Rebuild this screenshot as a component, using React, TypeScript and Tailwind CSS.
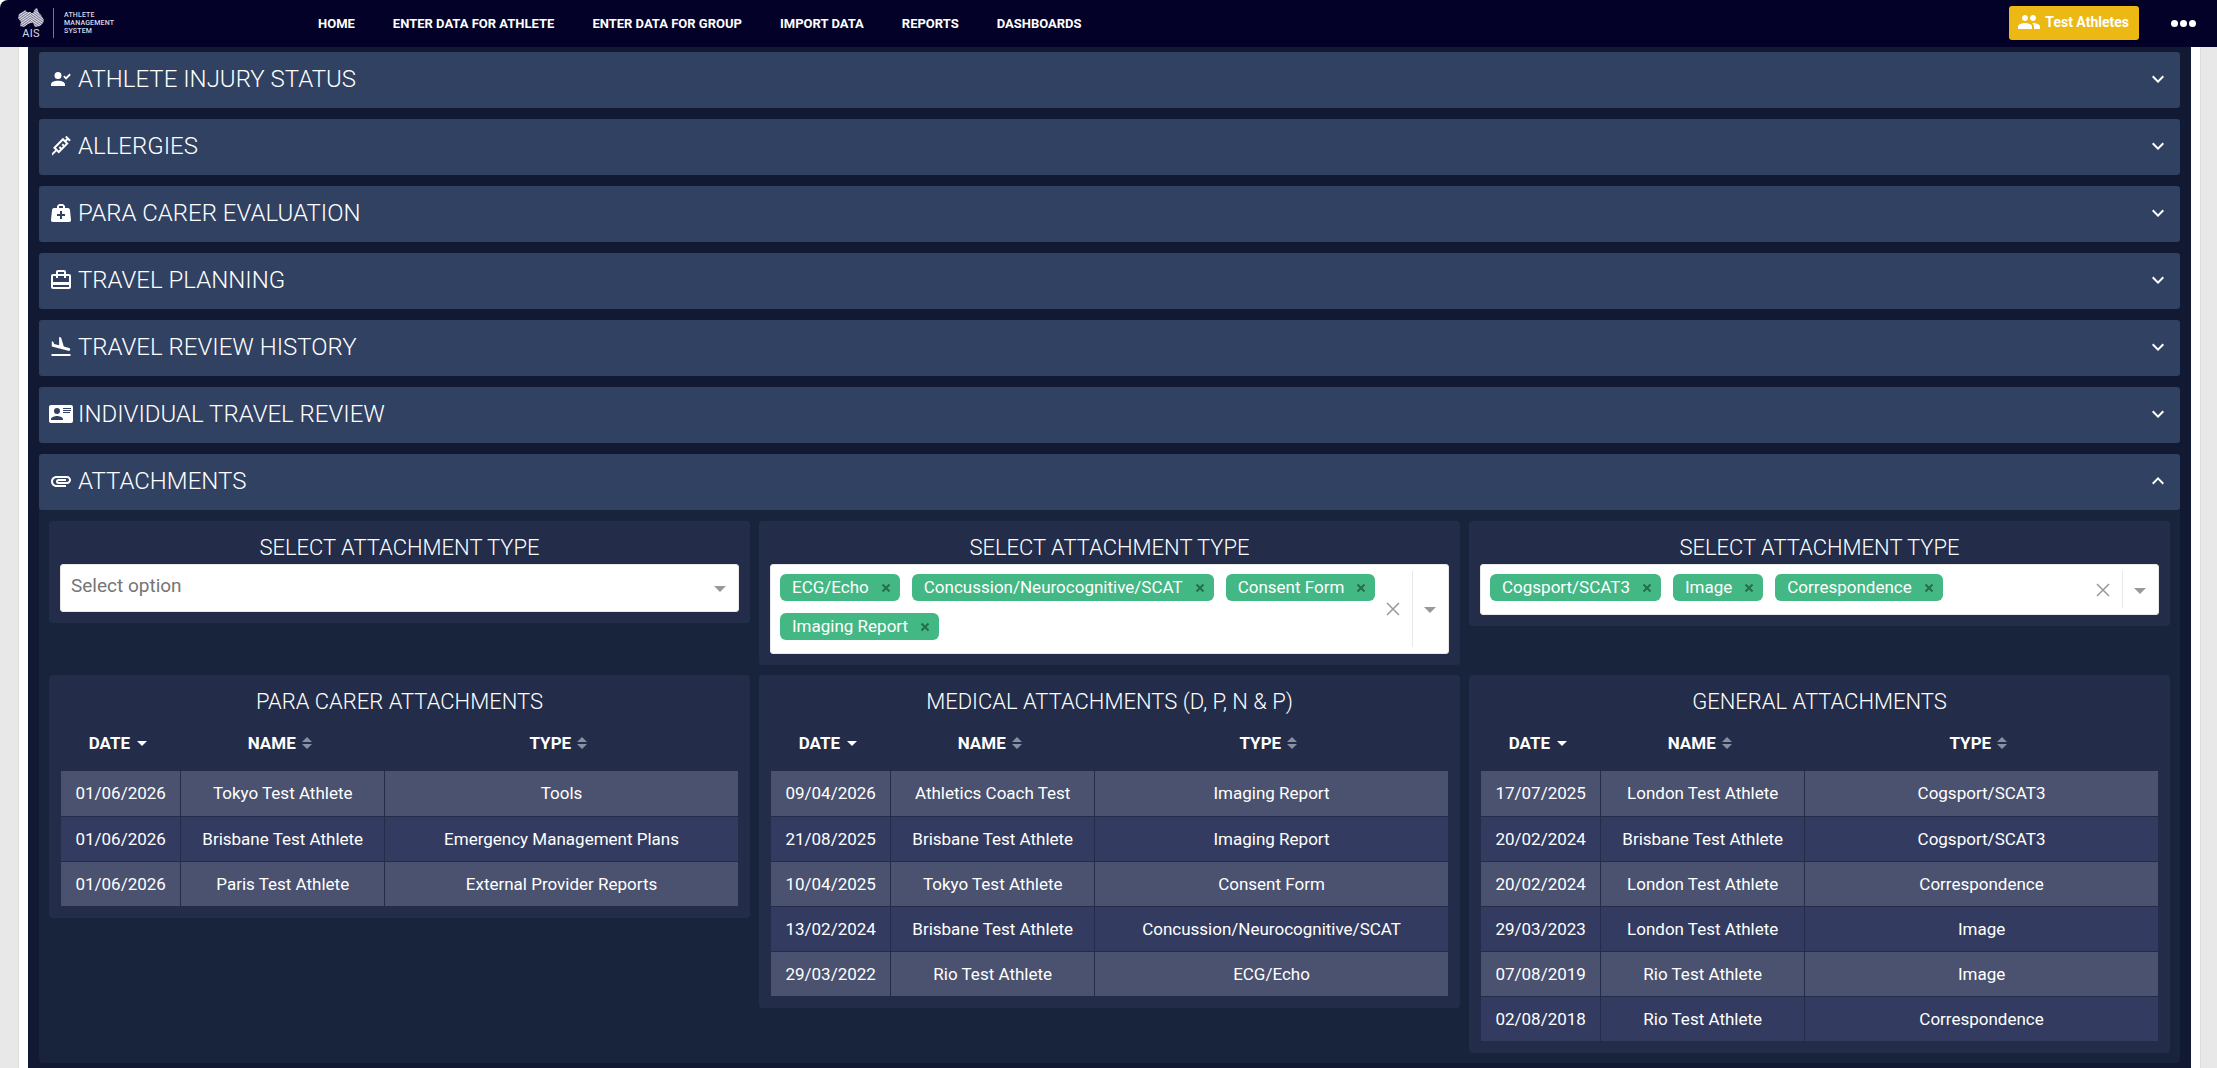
import { useState } from 'react';
import type { ReactNode } from 'react';
import { MdAttachment, MdCardTravel, MdExpandLess, MdExpandMore, MdFlightLand, MdGroup } from 'react-icons/md';

type Row = [date: string, name: string, type: string];

const navLinks = [
  'HOME',
  'ENTER DATA FOR ATHLETE',
  'ENTER DATA FOR GROUP',
  'IMPORT DATA',
  'REPORTS',
  'DASHBOARDS',
];

function PathIcon({ d }: { d: string }) {
  return (
    <svg viewBox="0 0 24 24" className="size-6 shrink-0 fill-current" aria-hidden="true">
      <path d={d} />
    </svg>
  );
}

const accountCheck =
  'M9,5A3.5,3.5 0 0,1 12.5,8.5A3.5,3.5 0 0,1 9,12A3.5,3.5 0 0,1 5.5,8.5A3.5,3.5 0 0,1 9,5M9,13.75C12.87,13.75 16,15.32 16,17.25V19H2V17.25C2,15.32 5.13,13.75 9,13.75M17,12.66L14.25,9.66L15.41,8.5L17,10.09L20.59,6.5L21.75,7.91L17,12.66Z';
const needle =
  'M11.15,15.18L9.73,13.77L11.15,12.35L12.56,13.77L13.97,12.35L12.56,10.94L13.97,9.53L15.39,10.94L16.8,9.53L13.97,6.7L6.9,13.77L9.73,16.6L11.15,15.18M3.08,19L6.2,15.89L4.08,13.77L13.97,3.87L16.1,6L17.5,4.58L16.1,3.16L17.5,1.75L21.75,6L20.34,7.4L18.92,6L17.5,7.4L19.63,9.53L9.73,19.42L7.61,17.3L3.08,21.84V19Z';
const medicalBag =
  'M10,3L8,5V7H5C3.85,7 3.12,8 3,9L2,19C1.88,20 2.54,21 4,21H20C21.46,21 22.12,20 22,19L21,9C20.88,8 20.06,7 19,7H16V5L14,3H10M10,5H14V7H10V5M11,10H13V13H16V15H13V18H11V15H8V13H11V10Z';
const accountCard =
  'M2,3H22C23.05,3 24,3.95 24,5V19C24,20.05 23.05,21 22,21H2C0.95,21 0,20.05 0,19V5C0,3.95 0.95,3 2,3M14,6V7H22V6H14M14,8V9H22V8H14M14,10V11H21V10H14M8,13.91C6,13.91 2,15 2,17V18H14V17C14,15 10,13.91 8,13.91M8,6A3,3 0 0,0 5,9A3,3 0 0,0 8,12A3,3 0 0,0 11,9A3,3 0 0,0 8,6Z';

const sections: { title: string; icon: ReactNode }[] = [
  { title: 'ATHLETE INJURY STATUS', icon: <PathIcon d={accountCheck} /> },
  { title: 'ALLERGIES', icon: <PathIcon d={needle} /> },
  { title: 'PARA CARER EVALUATION', icon: <PathIcon d={medicalBag} /> },
  { title: 'TRAVEL PLANNING', icon: <MdCardTravel className="size-6 shrink-0" /> },
  { title: 'TRAVEL REVIEW HISTORY', icon: <MdFlightLand className="size-6 shrink-0" /> },
  { title: 'INDIVIDUAL TRAVEL REVIEW', icon: <PathIcon d={accountCard} /> },
];

const paraRows: Row[] = [
  ['01/06/2026', 'Tokyo Test Athlete', 'Tools'],
  ['01/06/2026', 'Brisbane Test Athlete', 'Emergency Management Plans'],
  ['01/06/2026', 'Paris Test Athlete', 'External Provider Reports'],
];

const medicalRows: Row[] = [
  ['09/04/2026', 'Athletics Coach Test', 'Imaging Report'],
  ['21/08/2025', 'Brisbane Test Athlete', 'Imaging Report'],
  ['10/04/2025', 'Tokyo Test Athlete', 'Consent Form'],
  ['13/02/2024', 'Brisbane Test Athlete', 'Concussion/Neurocognitive/SCAT'],
  ['29/03/2022', 'Rio Test Athlete', 'ECG/Echo'],
];

const generalRows: Row[] = [
  ['17/07/2025', 'London Test Athlete', 'Cogsport/SCAT3'],
  ['20/02/2024', 'Brisbane Test Athlete', 'Cogsport/SCAT3'],
  ['20/02/2024', 'London Test Athlete', 'Correspondence'],
  ['29/03/2023', 'London Test Athlete', 'Image'],
  ['07/08/2019', 'Rio Test Athlete', 'Image'],
  ['02/08/2018', 'Rio Test Athlete', 'Correspondence'],
];

function Logo() {
  return (
    <a href="#" className="flex items-center text-[#d9d9e3]">
      <span className="flex w-7 flex-col items-center">
        <svg viewBox="0 0 26 20" className="h-5 w-[26px]" aria-hidden="true">
          <defs>
            <pattern id="weave-left" width="2" height="2" patternUnits="userSpaceOnUse" patternTransform="rotate(-35)">
              <rect width="2" height="2" fill="#77758f" />
              <rect width="2" height="1" fill="#e4e4ec" />
            </pattern>
            <pattern id="weave-right" width="2" height="2" patternUnits="userSpaceOnUse" patternTransform="rotate(35)">
              <rect width="2" height="2" fill="#77758f" />
              <rect width="2" height="1" fill="#e4e4ec" />
            </pattern>
          </defs>
          <path
            d="M1 6 L6 3 L7 2 L9 4 L13 4 L13 15 L10 16 L6 19 L2 18 L3 14 L0 10 Z"
            fill="url(#weave-left)"
          />
          <path
            d="M13 5 L15 5 L17 1 L19 0 L21 5 L23 7 L26 12 L25 15 L22 18 L17 19 L15 15 L13 15 Z"
            fill="url(#weave-right)"
          />
        </svg>
        <span className="text-[11px] leading-[11px] tracking-wide">AIS</span>
      </span>
      <span className="ml-2 h-[30px] w-px bg-[#77758f]" />
      <span className="ml-[10px] text-[7px] leading-[8px] font-medium tracking-wide">
        ATHLETE
        <br />
        MANAGEMENT
        <br />
        SYSTEM
      </span>
    </a>
  );
}

function Header() {
  return (
    <header className="sticky top-0 z-10 flex h-[47px] items-center rounded-tl-lg bg-[#030128] pr-[21px] pb-px pl-[17px] text-white">
      <div className="w-[301px] shrink-0">
        <Logo />
      </div>
      <nav className="flex gap-[38px] pt-[2px] text-[13px] font-bold whitespace-nowrap">
        {navLinks.map((label) => (
          <a key={label} href="#">
            {label}
          </a>
        ))}
      </nav>
      <button
        type="button"
        className="ml-auto flex h-[34px] items-center gap-1 rounded-[3px] bg-[#ecb914] pr-[10px] pb-[2px] pl-2 text-sm font-bold"
      >
        <MdGroup className="size-6" />
        Test Athletes
      </button>
      <button type="button" aria-label="More" className="ml-8 flex gap-[2px]">
        <span className="size-[7px] rounded-full bg-white" />
        <span className="size-[7px] rounded-full bg-white" />
        <span className="size-[7px] rounded-full bg-white" />
      </button>
    </header>
  );
}

function SectionBar({ title, icon, open }: { title: string; icon: ReactNode; open?: boolean }) {
  const Chevron = open ? MdExpandLess : MdExpandMore;
  return (
    <button
      type="button"
      aria-expanded={!!open}
      className="flex h-14 w-full items-center gap-[5px] rounded-[3px] bg-[#314162] px-[10px] pb-[2px] text-left text-2xl font-light"
    >
      {icon}
      <span>{title}</span>
      <Chevron className="ml-auto size-6" />
    </button>
  );
}

function Panel({ title, labelFor, children }: { title: string; labelFor?: string; children: ReactNode }) {
  return (
    <div className="rounded bg-[#232d49] px-[11px] pt-[10px] pb-[11px]">
      {labelFor ? (
        <label htmlFor={labelFor} className="block text-center text-[22px] leading-[33px] font-light">
          {title}
        </label>
      ) : (
        <h2 className="text-center text-[22px] leading-[33px] font-light">{title}</h2>
      )}
      {children}
    </div>
  );
}

function Caret() {
  return <span className="block border-x-6 border-t-6 border-x-transparent border-t-[#999]" />;
}

function SingleSelect({ id }: { id: string }) {
  return (
    <div className="relative">
      <select
        id={id}
        defaultValue=""
        className="block h-12 w-full appearance-none rounded-[3px] border border-[#e8e8e8] bg-white px-[10px] pb-1 text-[19px] text-[#757575]"
      >
        <option value="">Select option</option>
        <option>Tools</option>
        <option>Emergency Management Plans</option>
        <option>External Provider Reports</option>
      </select>
      <span className="pointer-events-none absolute top-[22px] right-[13px]">
        <Caret />
      </span>
    </div>
  );
}

function TagSelect({ id, initial }: { id: string; initial: string[] }) {
  const [tags, setTags] = useState(initial);

  return (
    <div className="flex rounded-[3px] border border-[#e8e8e8] bg-white py-[6px]">
      <ul className="flex flex-1 flex-wrap gap-x-3 gap-y-[12px] pt-[3px] pr-2 pb-[7px] pl-[9px]">
        {tags.map((tag) => (
          <li
            key={tag}
            className="flex h-[27px] items-center gap-3 rounded-[6px] bg-[#43b784] pr-[9px] pl-3 text-[17px] leading-none text-white"
          >
            {tag}
            <button
              type="button"
              aria-label={`Remove ${tag}`}
              onClick={() => setTags(tags.filter((t) => t !== tag))}
              className="text-[#266d4d]"
            >
              <svg viewBox="0 0 10 10" className="size-[10px]" stroke="currentColor" strokeWidth="2">
                <path d="M1.5 1.5 L8.5 8.5 M8.5 1.5 L1.5 8.5" />
              </svg>
            </button>
          </li>
        ))}
      </ul>
      <button type="button" aria-label="Clear all" onClick={() => setTags([])} className="pr-3 text-[#999]">
        <svg viewBox="0 0 14 14" className="size-[14px]" stroke="currentColor" strokeWidth="1.5">
          <path d="M1 1 L13 13 M13 1 L1 13" />
        </svg>
      </button>
      <button
        type="button"
        id={id}
        aria-label="Open options"
        className="flex items-center border-l border-[#e8e8e8] pt-[2px] pr-3 pl-[11px]"
      >
        <Caret />
      </button>
    </div>
  );
}

function SortIcon() {
  return (
    <svg viewBox="0 0 10 12" className="h-3 w-[10px] fill-[#8a90a3]" aria-hidden="true">
      <path d="M5 0 L10 5 H0 Z M0 7 H10 L5 12 Z" />
    </svg>
  );
}

function AttachmentTable({ rows }: { rows: Row[] }) {
  return (
    <div className="px-px">
      <table className="w-full table-fixed border-collapse text-center text-[17px]">
        <colgroup>
          <col className="w-[17.7%]" />
          <col className="w-[30.1%]" />
          <col />
        </colgroup>
        <thead>
          <tr className="h-[53px] align-top">
            <th className="pt-[13px] pr-[6px] leading-6">
              <button type="button" className="inline-flex items-center gap-[7px] font-bold">
                DATE
                <span className="border-x-5 border-t-5 border-x-transparent border-t-white" />
              </button>
            </th>
            {['NAME', 'TYPE'].map((label) => (
              <th key={label} className="pt-[13px] pr-[6px] leading-6">
                <button type="button" className="inline-flex items-center gap-[6px] font-bold">
                  {label}
                  <SortIcon />
                </button>
              </th>
            ))}
          </tr>
        </thead>
        <tbody>
          {rows.map((row, i) => (
            <tr key={i} className="h-[45px] odd:bg-[#4a526f] even:bg-[#333c60]">
              {row.map((cell, j) => (
                <td
                  key={j}
                  className="border-r border-b border-[#232d49] leading-6 last:border-r-0"
                >
                  {cell}
                </td>
              ))}
            </tr>
          ))}
        </tbody>
      </table>
    </div>
  );
}

export default function App() {
  return (
    <div className="min-h-screen bg-white font-['Roboto','Liberation_Sans',sans-serif]">
      <Header />
      <div className="bg-[#e8e8e8] pr-4 pl-[18px]">
        <main className="border-x border-[#dcdcdc] bg-white px-[9px]">
          <div className="flex min-h-[calc(100vh-47px)] flex-col gap-[11px] bg-[#121a33] px-[11px] pt-[5px] pb-[3px] text-white">
            {sections.map((section) => (
              <SectionBar key={section.title} {...section} />
            ))}

            {/* Attachments */}
            <section className="rounded bg-[#18233c]">
              <SectionBar title="ATTACHMENTS" icon={<MdAttachment className="size-6 shrink-0" />} open />
              <div className="grid grid-cols-3 items-start gap-x-[9px] gap-y-[10px] px-[10px] pt-[11px] pb-[10px]">
                <Panel title="SELECT ATTACHMENT TYPE" labelFor="para-type">
                  <SingleSelect id="para-type" />
                </Panel>
                <Panel title="SELECT ATTACHMENT TYPE" labelFor="medical-type">
                  <TagSelect
                    id="medical-type"
                    initial={['ECG/Echo', 'Concussion/Neurocognitive/SCAT', 'Consent Form', 'Imaging Report']}
                  />
                </Panel>
                <Panel title="SELECT ATTACHMENT TYPE" labelFor="general-type">
                  <TagSelect id="general-type" initial={['Cogsport/SCAT3', 'Image', 'Correspondence']} />
                </Panel>
                <Panel title="PARA CARER ATTACHMENTS">
                  <AttachmentTable rows={paraRows} />
                </Panel>
                <Panel title="MEDICAL ATTACHMENTS (D, P, N & P)">
                  <AttachmentTable rows={medicalRows} />
                </Panel>
                <Panel title="GENERAL ATTACHMENTS">
                  <AttachmentTable rows={generalRows} />
                </Panel>
              </div>
            </section>
          </div>
        </main>
      </div>
    </div>
  );
}
